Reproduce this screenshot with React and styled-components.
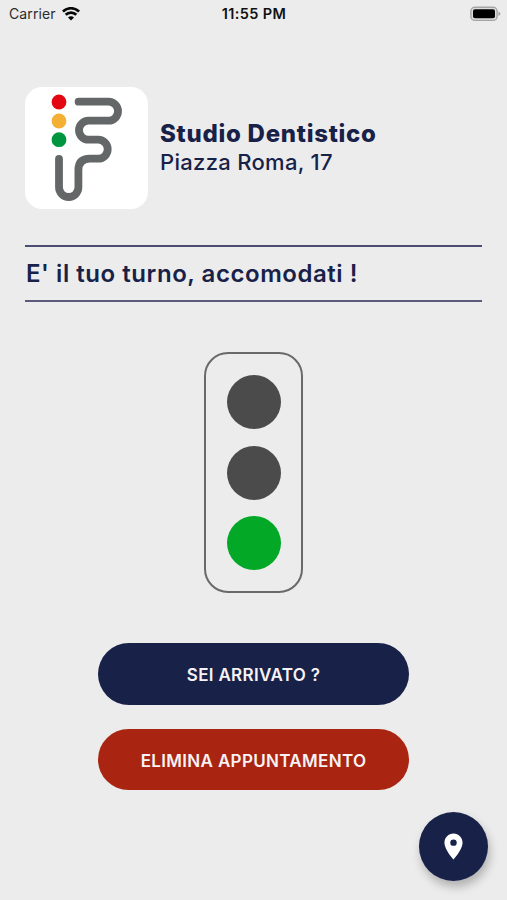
import styled, { createGlobalStyle } from "styled-components";

const GlobalStyle = createGlobalStyle`
  * {
    box-sizing: border-box;
  }
  body {
    margin: 0;
    background-color: #ececec;
  }
`;

const Container = styled.div`
  position: relative;
  width: 100%;
  height: 900px;
  overflow: hidden;
  display: flex;
  flex-direction: column;
  background-color: #ececec;
  color: #182148;
  font-family: Inter, "Open Sans", sans-serif;
`;

const StatusBar = styled.div`
  display: grid;
  grid-template-columns: 1fr auto 1fr;
  align-items: center;
  height: 27px;
  padding: 0 6px 0 9px;
  color: #111;
  font-size: 14px;
`;
const Carrier = styled.div`
  display: flex;
  align-items: center;
  gap: 6px;
  color: #2b2b2b;
`;
const CarrierName = styled.span`
  letter-spacing: 0.1px;
`;
const Clock = styled.span`
  margin-right: 2px;
  font-size: 14.5px;
  font-weight: 600;
  letter-spacing: 0.4px;
`;
const Battery = styled.div`
  display: flex;
  justify-content: flex-end;
`;

const Header = styled.header`
  display: flex;
  align-items: center;
  gap: 12px;
  margin: 59.5px 25px 0;
`;
const LogoCard = styled.div`
  width: 123px;
  height: 122px;
  border-radius: 17px;
  background-color: white;
`;
const Title = styled.h1`
  margin: 0;
  font-size: 24px;
  font-weight: 800;
  line-height: 28px;
  letter-spacing: 0.73px;
  white-space: nowrap;
`;
const Address = styled.p`
  margin: 0;
  font-size: 22px;
  font-weight: 500;
  line-height: 28px;
  letter-spacing: 0.3px;
  white-space: nowrap;
`;

const Message = styled.div`
  margin: 36.5px 25px 0;
  height: 57px;
  display: flex;
  align-items: center;
  border-top: 2px solid #4b4d72;
  border-bottom: 2px solid #5b5a7c;
  padding-left: 1px;
  font-size: 24px;
  font-weight: 600;
  letter-spacing: 0.55px;
  white-space: nowrap;
`;

const TrafficLight = styled.div`
  align-self: center;
  width: 99px;
  height: 241px;
  margin-top: 50px;
  display: flex;
  flex-direction: column;
  align-items: center;
  justify-content: center;
  gap: 16.5px;
  border: 2px solid #6a6868;
  border-radius: 24px;
`;
const Lamp = styled.div`
  width: 54px;
  height: 54px;
  border-radius: 50%;
  background-color: ${(props) => props.$color};
`;

const Actions = styled.div`
  display: flex;
  flex-direction: column;
  align-items: center;
  gap: 24px;
  margin-top: 50.4px;
`;
const Button = styled.button`
  width: 311px;
  height: 61.5px;
  padding: 2px 0 0;
  border: none;
  border-radius: 31px;
  background-color: ${(props) => props.$color};
  color: #f7f2f4;
  font-family: inherit;
  font-size: 17px;
  font-weight: 600;
  letter-spacing: 0.33px;
  cursor: pointer;
`;

const Fab = styled.button`
  position: absolute;
  right: 19px;
  bottom: 19.5px;
  width: 69px;
  height: 69px;
  padding: 0;
  display: flex;
  align-items: center;
  justify-content: center;
  border: none;
  border-radius: 50%;
  background-color: #182148;
  box-shadow: 2px 6px 10px rgba(0, 0, 0, 0.25);
  cursor: pointer;
`;

const WifiIcon = () => (
  <svg width="18" height="14" viewBox="0 0 18 14" fill="none" stroke="#080808" strokeWidth="2.7">
    <path d="M0.9 4.5A11.7 11.7 0 0 1 17.1 4.5" />
    <path d="M3.7 7.8A7.4 7.4 0 0 1 14.3 7.8" />
    <path d="M9 13.6L6 10.6A4.2 4.2 0 0 1 12 10.6Z" fill="#080808" stroke="none" />
  </svg>
);

const BatteryIcon = () => (
  <svg width="31" height="16" viewBox="0 0 31 16">
    <rect x="0.9" y="1.2" width="26.2" height="13.2" rx="4" fill="#ddd" stroke="#a5a5a5" strokeWidth="1.4" />
    <rect x="3" y="3.3" width="22" height="9" rx="2" fill="#000" />
    <path d="M28.4 5.5C31 6.5 31 9 28.4 10Z" fill="#a5a5a5" />
  </svg>
);

const Logo = () => (
  <svg width="123" height="122" viewBox="0 0 123 122" fill="none">
    <circle cx="34" cy="15" r="7.4" fill="#e30613" />
    <circle cx="34" cy="34" r="7.4" fill="#f3b034" />
    <circle cx="34" cy="52.7" r="7.4" fill="#009640" />
    <path
      d="M53.6 14.7H83.5a9.5 9.5 0 0 1 0 19H63.5a9.5 9.5 0 0 0 0 19H73.2a9.5 9.5 0 0 1 0 19H65Q53.4 71.7 53.4 83.2V100.3a9.7 9.7 0 0 1 -19.4 0V72"
      stroke="#646767"
      strokeWidth="7.8"
      strokeLinecap="round"
    />
  </svg>
);

const PinIcon = () => (
  <svg width="31" height="31" viewBox="0 0 24 24" fill="white">
    <path d="M12 2C8.13 2 5 5.13 5 9c0 5.25 7 13 7 13s7-7.75 7-13c0-3.87-3.13-7-7-7zm0 9.5a2.5 2.5 0 0 1 0-5 2.5 2.5 0 0 1 0 5z" />
  </svg>
);

const App = () => {
  return (
    <>
      <GlobalStyle />
      <Container>
        <StatusBar>
          <Carrier>
            <CarrierName>Carrier</CarrierName>
            <WifiIcon />
          </Carrier>
          <Clock>11:55 PM</Clock>
          <Battery>
            <BatteryIcon />
          </Battery>
        </StatusBar>
        <Header>
          <LogoCard>
            <Logo />
          </LogoCard>
          <div>
            <Title>Studio Dentistico</Title>
            <Address>Piazza Roma, 17</Address>
          </div>
        </Header>
        <Message>E' il tuo turno, accomodati !</Message>
        <TrafficLight>
          <Lamp $color="#4b4b4b" />
          <Lamp $color="#4b4b4b" />
          <Lamp $color="#03a826" />
        </TrafficLight>
        <Actions>
          <Button $color="#182148">SEI ARRIVATO ?</Button>
          <Button $color="#a92511">ELIMINA APPUNTAMENTO</Button>
        </Actions>
        <Fab aria-label="Mappa">
          <PinIcon />
        </Fab>
      </Container>
    </>
  );
};

export default App;
